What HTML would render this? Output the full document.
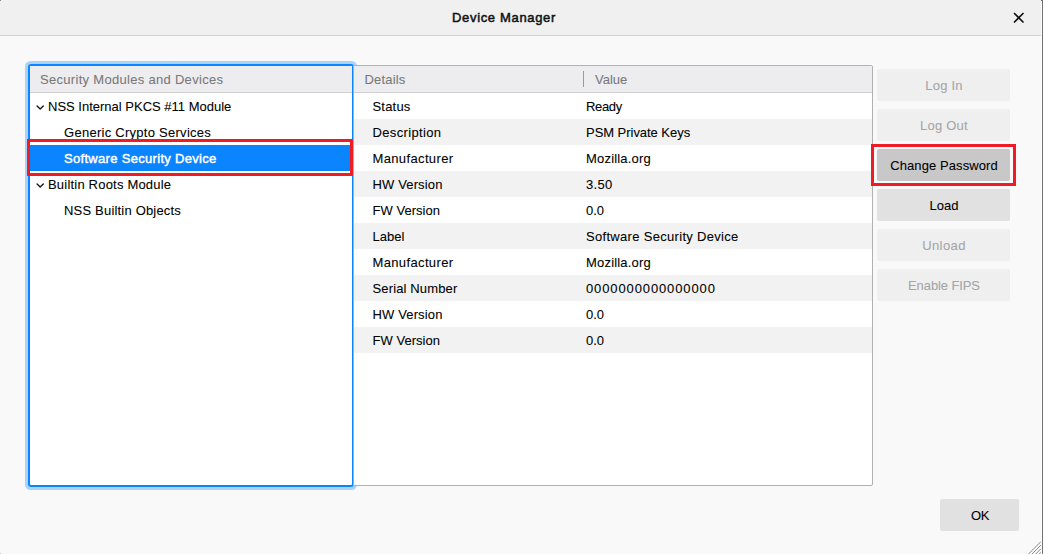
<!DOCTYPE html>
<html>
<head>
<meta charset="utf-8">
<title>Device Manager</title>
<style>
html,body{margin:0;padding:0;}
body{width:1043px;height:554px;overflow:hidden;position:relative;background:#f9f9fa;font-family:"Liberation Sans",sans-serif;font-size:13px;color:#000;-webkit-text-stroke:0.08px currentColor;}
.abs{position:absolute;}
#titlebar{left:0;top:0;width:1043px;height:35px;background:#f0f0f0;border-bottom:1px solid #d2d2d2;box-sizing:content-box;}
#title{left:0;width:1008px;top:0;height:35px;line-height:36px;text-align:center;font-weight:normal;font-size:13px;color:#111;-webkit-text-stroke:0.5px #111;}
#rightedge{left:1042px;top:0;width:1px;height:554px;background:#707070;}
#rightedge2{left:1041px;top:0;width:1px;height:554px;background:#fdfdfd;}
#left{left:29px;top:65px;width:324px;height:421px;box-sizing:border-box;border:1px solid #0a84ff;background:#fff;box-shadow:0 0 0 1px #0a84ff,0 0 0 4px #a9d2ff;border-radius:2px;}
#right{left:353px;top:65px;width:520px;height:421px;box-sizing:border-box;border:1px solid #b1b1b3;background:#fff;border-radius:0 2px 2px 0;}
.hdr{position:absolute;left:0;top:0;right:0;height:26px;background:#ededf0;border-bottom:1px solid #d0d0d3;line-height:26px;color:#797979;}
.row{position:absolute;left:0;right:0;height:26px;line-height:26px;white-space:nowrap;}
.row.g{background:#f2f2f2;}
.row.sel{background:#0a84ff;color:#fff;-webkit-text-stroke:0.45px #fff;}
.t{position:absolute;top:1px;white-space:nowrap;}
.chev{position:absolute;left:5px;top:11px;}
.btn{position:absolute;left:877px;width:132px;padding-left:1px;height:32px;line-height:34px;text-align:center;border-radius:2px;background:#e1e1e2;color:#000;}
.btn.dis{background:#efeff0;color:#a5a5a6;}
.btn.act{background:#c8c8c9;}
.red{position:absolute;box-sizing:border-box;border:3px solid #ee1c25;}
</style>
</head>
<body>
<div id="titlebar" class="abs"></div>
<div id="title" class="abs" style="letter-spacing:0.66px">Device Manager</div>
<svg class="abs" style="left:1013px;top:12px" width="12" height="12" viewBox="0 0 12 12"><path d="M1.5 1.5 L10 10 M10 1.5 L1.5 10" stroke="#111" stroke-width="1.7" fill="none" stroke-linecap="round"/></svg>

<div id="left" class="abs">
  <div class="hdr"><span class="t" style="left:10px;letter-spacing:0.30px">Security Modules and Devices</span></div>
  <div class="row" style="top:27px"><svg class="chev" width="11" height="8" viewBox="0 0 11 8"><path d="M2.1 1.9 L5.2 5 L8.3 1.9" stroke="#1a1a1a" stroke-width="1.4" fill="none" stroke-linecap="round" stroke-linejoin="round"/></svg><span class="t" style="left:18px">NSS Internal PKCS #11 Module</span></div>
  <div class="row" style="top:53px"><span class="t" style="left:34px;letter-spacing:0.27px">Generic Crypto Services</span></div>
  <div class="row sel" style="top:79px"><span class="t" style="left:34px;letter-spacing:0.31px">Software Security Device</span></div>
  <div class="row" style="top:105px"><svg class="chev" width="11" height="8" viewBox="0 0 11 8"><path d="M2.1 1.9 L5.2 5 L8.3 1.9" stroke="#1a1a1a" stroke-width="1.4" fill="none" stroke-linecap="round" stroke-linejoin="round"/></svg><span class="t" style="left:18px;letter-spacing:0.20px">Builtin Roots Module</span></div>
  <div class="row" style="top:131px"><span class="t" style="left:34px;letter-spacing:0.19px">NSS Builtin Objects</span></div>
</div>

<div id="right" class="abs">
  <div class="hdr"><span class="t" style="left:10.5px;letter-spacing:0.17px">Details</span><span class="abs" style="left:229px;top:5px;width:1px;height:16px;background:#9a9a9c"></span><span class="t" style="left:241px">Value</span></div>
  <div class="row" style="top:27px"><span class="t" style="left:18.5px;letter-spacing:0.20px">Status</span><span class="t" style="left:232px;letter-spacing:-0.35px">Ready</span></div>
  <div class="row g" style="top:53px"><span class="t" style="left:18.5px;letter-spacing:0.34px">Description</span><span class="t" style="left:232px;letter-spacing:-0.04px">PSM Private Keys</span></div>
  <div class="row" style="top:79px"><span class="t" style="left:18.5px;letter-spacing:0.36px">Manufacturer</span><span class="t" style="left:232px;letter-spacing:0.19px">Mozilla.org</span></div>
  <div class="row g" style="top:105px"><span class="t" style="left:18.5px;letter-spacing:0.14px">HW Version</span><span class="t" style="left:232px;letter-spacing:0.27px">3.50</span></div>
  <div class="row" style="top:131px"><span class="t" style="left:18.5px;letter-spacing:0.04px">FW Version</span><span class="t" style="left:232px;letter-spacing:-0.10px">0.0</span></div>
  <div class="row g" style="top:157px"><span class="t" style="left:18.5px">Label</span><span class="t" style="left:232px;letter-spacing:0.31px">Software Security Device</span></div>
  <div class="row" style="top:183px"><span class="t" style="left:18.5px;letter-spacing:0.36px">Manufacturer</span><span class="t" style="left:232px;letter-spacing:0.19px">Mozilla.org</span></div>
  <div class="row g" style="top:209px"><span class="t" style="left:18.5px;letter-spacing:0.14px">Serial Number</span><span class="t" style="left:232px;letter-spacing:0.88px">0000000000000000</span></div>
  <div class="row" style="top:235px"><span class="t" style="left:18.5px;letter-spacing:0.14px">HW Version</span><span class="t" style="left:232px;letter-spacing:-0.10px">0.0</span></div>
  <div class="row g" style="top:261px"><span class="t" style="left:18.5px;letter-spacing:0.04px">FW Version</span><span class="t" style="left:232px;letter-spacing:-0.10px">0.0</span></div>
</div>

<div class="btn dis" style="top:69px;letter-spacing:0.2px">Log In</div>
<div class="btn dis" style="top:109px;letter-spacing:0.22px">Log Out</div>
<div class="btn act" style="top:149px;letter-spacing:0.09px">Change Password</div>
<div class="btn" style="top:189px">Load</div>
<div class="btn dis" style="top:229px;letter-spacing:0.4px">Unload</div>
<div class="btn dis" style="top:269px;letter-spacing:-0.1px">Enable FIPS</div>

<div class="btn" style="left:940px;top:499px;width:78px;letter-spacing:-0.40px">OK</div>

<div class="red" style="left:27px;top:139px;width:326px;height:37px"></div>
<div class="red" style="left:871px;top:144px;width:145px;height:42px"></div>

<div class="abs" style="left:0;top:0;width:1px;height:1px;background:#8a8a8a"></div>
<div class="abs" style="left:0;top:553px;width:1px;height:1px;background:#c8c8c8"></div>
<div id="rightedge2" class="abs"></div>
<div id="rightedge" class="abs"></div>
<div class="abs" style="left:1041px;top:0;width:1px;height:1px;background:#707070"></div>
<svg class="abs" style="left:1021px;top:534px" width="20" height="20" viewBox="1021 534 20 20"><g fill="none" stroke-width="1"><path d="M27.8 553.3 L40.3 540.8 M31.3 553.3 L40.3 544.3 M35 553.3 L40.3 548 M38.5 553.3 L40.3 551.5" transform="translate(1000 0)" stroke="#ffffff"/><path d="M28.5 554 L41 541.5 M32 554 L41 545 M35.7 554 L41 548.7 M39.2 554 L41 552.2" transform="translate(1000 0)" stroke="#7d7d7d" stroke-width="0.95"/></g></svg>
</body>
</html>
